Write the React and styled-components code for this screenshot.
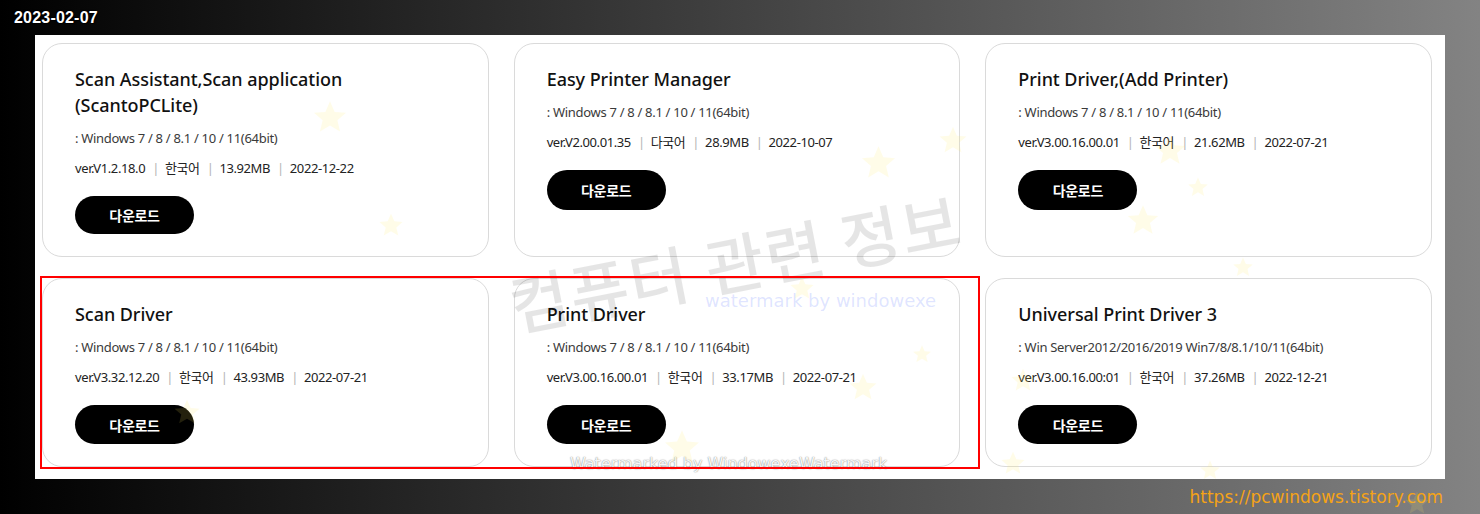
import React from "react";
import styled, { createGlobalStyle } from "styled-components";

const Global = createGlobalStyle`
  html, body { margin: 0; padding: 0; }
  body { font-family: "Noto Sans", "Noto Sans CJK KR", sans-serif; }
  * { box-sizing: border-box; }
`;

const Page = styled.div`
  position: relative;
  width: 1480px;
  height: 514px;
  overflow: hidden;
  display: flex;
  flex-direction: column;
  background: linear-gradient(to right, #000 0%, #838383 100%);
`;

const Header = styled.div`
  height: 35px;
  padding-left: 14px;
  display: flex;
  align-items: center;
`;

const DateText = styled.span`
  font-family: "Liberation Sans", Arial, sans-serif;
  font-weight: 700;
  font-size: 16px;
  letter-spacing: 0.2px;
  color: #fff;
  text-shadow: 1px 1px 1px #000, -1px -1px 1px #000;
`;

const Panel = styled.div`
  margin: 0 35px;
  height: 444px;
  background: #fff;
  padding: 8px 13px 12px 7px;
  display: grid;
  grid-template-columns: repeat(3, 1fr);
  grid-template-rows: 214px 189px;
  column-gap: 25px;
  row-gap: 21px;
`;

const Card = styled.div`
  border: 1px solid #dadada;
  border-radius: 20px;
  padding: 22px 32px 22px;
  display: flex;
  flex-direction: column;
  align-items: flex-start;
`;

const Title = styled.h3`
  margin: 0;
  font-family: "Noto Sans", "Noto Sans CJK KR", sans-serif;
  font-size: 18px;
  font-weight: 500;
  line-height: 26px;
  letter-spacing: -0.05px;
  color: #111;
`;

const OsLine = styled.p`
  margin: 10px 0 0;
  font-size: 13px;
  line-height: 20px;
  letter-spacing: -0.3px;
  color: #3a3a3a;
`;

const InfoLine = styled.div`
  margin-top: 10px;
  display: flex;
  align-items: center;
  font-size: 13px;
  line-height: 20px;
  letter-spacing: -0.4px;
  color: #222;
`;

const Sep = styled.span`
  color: #b5b5b5;
  margin: 0 6px 0 7px;
`;

const DownloadButton = styled.button`
  margin-top: 18px;
  width: 119px;
  height: 40px;
  border: none;
  border-radius: 20px;
  background: #000;
  color: #fff;
  font-family: "Noto Sans CJK KR", sans-serif;
  font-size: 14px;
  font-weight: 700;
  letter-spacing: -0.3px;
  cursor: pointer;
`;

const Footer = styled.div`
  flex: 1;
  display: flex;
  align-items: center;
  justify-content: flex-end;
  padding-right: 37px;
`;

const Url = styled.span`
  font-family: "DejaVu Sans", Verdana, sans-serif;
  font-size: 17px;
  color: #f5a316;
`;

const Overlay = styled.div`
  position: absolute;
  inset: 0;
  pointer-events: none;
`;

const BigMark = styled.div`
  position: absolute;
  left: 735px;
  top: 260px;
  transform: translate(-50%, -50%) rotate(-11deg);
  white-space: nowrap;
  font-family: "Noto Sans CJK KR", sans-serif;
  font-weight: 500;
  font-size: 64px;
  letter-spacing: 2px;
  color: rgba(0, 0, 0, 0.1);
`;

const BlueMark = styled.div`
  position: absolute;
  left: 705px;
  top: 290px;
  white-space: nowrap;
  font-family: "DejaVu Sans", Verdana, sans-serif;
  font-size: 18px;
  color: rgba(90, 120, 255, 0.2);
`;

const WhiteMark = styled.div`
  position: absolute;
  left: 570px;
  top: 454px;
  white-space: nowrap;
  font-family: "DejaVu Sans", Verdana, sans-serif;
  font-size: 16px;
  color: rgba(255, 255, 255, 0.95);
  text-shadow: 0 0 1px rgba(0, 0, 0, 0.45), 0 0 2px rgba(0, 0, 0, 0.2);
`;

const Annotation = styled.div`
  position: absolute;
  left: 40px;
  top: 276px;
  width: 940px;
  height: 193px;
  border: 2px solid #ff0000;
`;

const StarSvg = styled.svg`
  position: absolute;
`;

const Star = ({ x, y, size }) => (
  <StarSvg
    viewBox="0 0 24 24"
    width={size}
    height={size}
    style={{ left: x - size / 2, top: y - size / 2 }}
  >
    <path
      d="M12 1.5l3.1 7.1 7.6.6-5.8 5 1.8 7.5L12 17.7l-6.7 4 1.8-7.5-5.8-5 7.6-.6z"
      fill="rgba(255, 232, 90, 0.14)"
    />
  </StarSvg>
);

const stars = [
  [330, 117, 36], [391, 225, 26], [878, 162, 37], [953, 140, 30],
  [1170, 150, 34], [1198, 187, 22], [1143, 220, 34], [1243, 267, 22],
  [1023, 380, 26], [1013, 463, 26], [1210, 470, 22], [1417, 503, 26],
  [802, 288, 26], [922, 354, 20], [863, 387, 30], [682, 447, 38],
  [187, 412, 28],
];

const items = [
  {
    title: ["Scan Assistant,Scan application", "(ScantoPCLite)"],
    os: ": Windows 7 / 8 / 8.1 / 10 / 11(64bit)",
    info: ["ver.V1.2.18.0", "한국어", "13.92MB", "2022-12-22"],
  },
  {
    title: ["Easy Printer Manager"],
    os: ": Windows 7 / 8 / 8.1 / 10 / 11(64bit)",
    info: ["ver.V2.00.01.35", "다국어", "28.9MB", "2022-10-07"],
  },
  {
    title: ["Print Driver,(Add Printer)"],
    os: ": Windows 7 / 8 / 8.1 / 10 / 11(64bit)",
    info: ["ver.V3.00.16.00.01", "한국어", "21.62MB", "2022-07-21"],
  },
  {
    title: ["Scan Driver"],
    os: ": Windows 7 / 8 / 8.1 / 10 / 11(64bit)",
    info: ["ver.V3.32.12.20", "한국어", "43.93MB", "2022-07-21"],
  },
  {
    title: ["Print Driver"],
    os: ": Windows 7 / 8 / 8.1 / 10 / 11(64bit)",
    info: ["ver.V3.00.16.00.01", "한국어", "33.17MB", "2022-07-21"],
  },
  {
    title: ["Universal Print Driver 3"],
    os: ": Win Server2012/2016/2019 Win7/8/8.1/10/11(64bit)",
    info: ["ver.V3.00.16.00:01", "한국어", "37.26MB", "2022-12-21"],
  },
];

export default function App() {
  return (
    <>
      <Global />
      <Page>
        <Header>
          <DateText>2023-02-07</DateText>
        </Header>
        <Panel>
          {items.map((it, i) => (
            <Card key={i}>
              <Title>
                {it.title.map((t, j) => (
                  <React.Fragment key={j}>
                    {j > 0 && <br />}
                    {t}
                  </React.Fragment>
                ))}
              </Title>
              <OsLine>{it.os}</OsLine>
              <InfoLine>
                {it.info.map((v, j) => (
                  <React.Fragment key={j}>
                    {j > 0 && <Sep>|</Sep>}
                    <span>{v}</span>
                  </React.Fragment>
                ))}
              </InfoLine>
              <DownloadButton>다운로드</DownloadButton>
            </Card>
          ))}
        </Panel>
        <Footer>
          <Url>https://pcwindows.tistory.com</Url>
        </Footer>
        <Overlay>
          <BigMark>컴퓨터 관련 정보</BigMark>
          <BlueMark>watermark by windowexe</BlueMark>
          <WhiteMark>Watermarked by WindowexeWatermark</WhiteMark>
          {stars.map(([x, y, s], i) => (
            <Star key={i} x={x} y={y} size={s} />
          ))}
          <Annotation />
        </Overlay>
      </Page>
    </>
  );
}
